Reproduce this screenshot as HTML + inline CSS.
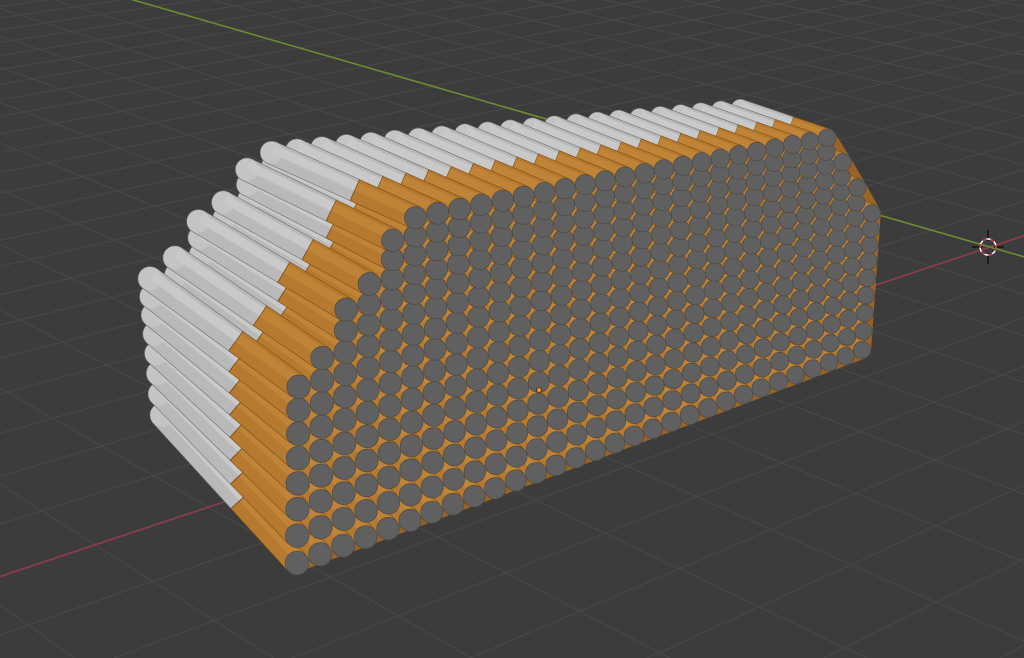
<!DOCTYPE html>
<html><head><meta charset="utf-8">
<style>html,body{margin:0;padding:0;background:#3c3c3c;overflow:hidden;width:1024px;height:658px}svg{display:block}</style>
</head><body>
<svg id="s" width="1024" height="658" viewBox="0 0 1024 658" xmlns="http://www.w3.org/2000/svg">
<rect width="1024" height="658" fill="#3c3c3c"/>
<g id="grid"></g><g id="axes"></g><g id="stack"></g><g id="top"></g>
</svg>
<script>
(function(){
var NS="http://www.w3.org/2000/svg";
function el(p,t,a){var e=document.createElementNS(NS,t);for(var k in a)e.setAttribute(k,a[k]);p.appendChild(e);return e;}
var O=[990,247],VX=[3000,-422],VY=[-1500,-471],kx=0.028,ky=0.024;
function P(a,b){var d=1+a*kx+b*ky;return [(O[0]+a*kx*VX[0]+b*ky*VY[0])/d,(O[1]+a*kx*VX[1]+b*ky*VY[1])/d];}
var g=document.getElementById('grid'),ax=document.getElementById('axes');
var path="";
for(var a=-150;a<=200;a++){
  var b0=(0.02-1-a*kx)/ky, b1=3000; if(b0>b1)continue;
  var p=P(a,b0),q=P(a,b1);path+="M"+p[0].toFixed(1)+" "+p[1].toFixed(1)+"L"+q[0].toFixed(1)+" "+q[1].toFixed(1);
}
for(var b=-150;b<=200;b++){
  var a0=(0.02-1-b*ky)/kx, a1=3000;
  var p=P(a0,b),q=P(a1,b);path+="M"+p[0].toFixed(1)+" "+p[1].toFixed(1)+"L"+q[0].toFixed(1)+" "+q[1].toFixed(1);
}
el(g,'path',{d:path,stroke:'#494949','stroke-width':1,fill:'none'});
var p=P((0.02-1)/kx,0),q=P(3000,0);
el(ax,'line',{x1:p[0],y1:p[1],x2:q[0],y2:q[1],stroke:'#8e3c49','stroke-width':1.6});
p=P(0,(0.02-1)/ky);q=P(0,3000);
el(ax,'line',{x1:p[0],y1:p[1],x2:q[0],y2:q[1],stroke:'#6b8c33','stroke-width':1.6});

var st=document.getElementById('stack');
var BL=[297,563],BR=[862,350],TL=[300,240],TR=[878,128];
var VBL=[-135,-148],VTL=[-160,-75],VTR=[-80,-25],VBR=[-80,-50];
var NC=30,NR=15;
function f(t){return 1.2*t/(1+0.2*t);}
function bil(A,B,C,D,u,v){
  var x0=A[0]+(B[0]-A[0])*u,y0=A[1]+(B[1]-A[1])*u,x1=C[0]+(D[0]-C[0])*u,y1=C[1]+(D[1]-C[1])*u;
  return [x0+(x1-x0)*v,y0+(y1-y0)*v];}
var maxL=[7,8,10,11,13],maxR={29:8,28:10,27:12};
function maxRow(i){if(i<5)return maxL[i];if(maxR[i]!==undefined)return maxR[i];return 14;}
var cells=[];
for(var i=0;i<NC;i++){for(var j=0;j<=maxRow(i);j++){
  var u=f(i/(NC-1)),v=f(j/(NR-1));
  var c=bil(BL,BR,TL,TR,u,v),V=bil(VBL,VBR,VTL,VTR,u,v);
  var r=11.8-3.2*u;
  cells.push({i:i,j:j,c:c,V:V,r:r,k:j-i});
}}
cells.sort(function(a,b){return a.k-b.k||b.i-a.i;});
var poly=[];
for(var i=0;i<NC;i++){var u=f(i/(NC-1));poly.push(bil(BL,BR,TL,TR,u,f(maxRow(i)/(NR-1))));}
var pb="M"+BL[0]+" "+BL[1];poly.forEach(function(p){pb+="L"+p[0]+" "+p[1];});pb+="L"+BR[0]+" "+BR[1]+"Z";
el(st,'path',{d:pb,fill:'#9a6426',stroke:'#9a6426','stroke-width':18,'stroke-linejoin':'round'});
cells.forEach(function(o){
  var c=o.c,V=o.V,r=o.r;
  var m=[c[0]+V[0]*0.42,c[1]+V[1]*0.42],e=[c[0]+V[0],c[1]+V[1]];
  el(st,'line',{x1:m[0],y1:m[1],x2:e[0],y2:e[1],stroke:'#6d6d6d','stroke-width':2*r+1.2});
  el(st,'circle',{cx:e[0],cy:e[1],r:r+0.6,fill:'#6d6d6d'});
  el(st,'line',{x1:m[0],y1:m[1],x2:e[0],y2:e[1],stroke:'#b9b9b9','stroke-width':2*r});
  el(st,'circle',{cx:e[0],cy:e[1],r:r,fill:'#c4c4c4'});
  var L=Math.hypot(V[0],V[1]),nx=V[1]/L,ny=-V[0]/L; if(ny>0){nx=-nx;ny=-ny;}
  el(st,'line',{x1:m[0]+nx*r*0.35,y1:m[1]+ny*r*0.35,x2:e[0]+nx*r*0.35,y2:e[1]+ny*r*0.35,stroke:'#c9c9c9','stroke-width':r*0.8});
  el(st,'line',{x1:c[0],y1:c[1],x2:m[0]+V[0]*0.005,y2:m[1]+V[1]*0.005,stroke:'#7a4c18','stroke-width':2*r+1.2});
  el(st,'line',{x1:c[0],y1:c[1],x2:m[0],y2:m[1],stroke:'#b57a30','stroke-width':2*r});
  el(st,'line',{x1:c[0]+nx*r*0.35,y1:c[1]+ny*r*0.35,x2:m[0]+nx*r*0.35,y2:m[1]+ny*r*0.35,stroke:'#bf8437','stroke-width':r*0.8});
});
var tp=document.getElementById('top');
cells.forEach(function(o){
  el(tp,'circle',{cx:o.c[0],cy:o.c[1],r:o.r,fill:'#606060',stroke:'#4e4a44','stroke-width':0.7});
});
el(tp,'circle',{cx:539,cy:390,r:2.5,fill:'#f0901a',stroke:'#222','stroke-width':0.6});
var cx=988,cy=247;
el(tp,'line',{x1:cx,y1:cy-17,x2:cx,y2:cy-6,stroke:'#111','stroke-width':1.5});
el(tp,'line',{x1:cx,y1:cy+6,x2:cx,y2:cy+17,stroke:'#111','stroke-width':1.5});
el(tp,'line',{x1:cx-16,y1:cy,x2:cx-6,y2:cy,stroke:'#111','stroke-width':1.5});
el(tp,'line',{x1:cx+6,y1:cy,x2:cx+16,y2:cy,stroke:'#111','stroke-width':1.5});
el(tp,'circle',{cx:cx,cy:cy,r:8,fill:'none',stroke:'#fff','stroke-width':1.5});
el(tp,'circle',{cx:cx,cy:cy,r:8,fill:'none',stroke:'#c8283a','stroke-width':1.5,'stroke-dasharray':'4 4'});
})();
</script>
</body></html>
